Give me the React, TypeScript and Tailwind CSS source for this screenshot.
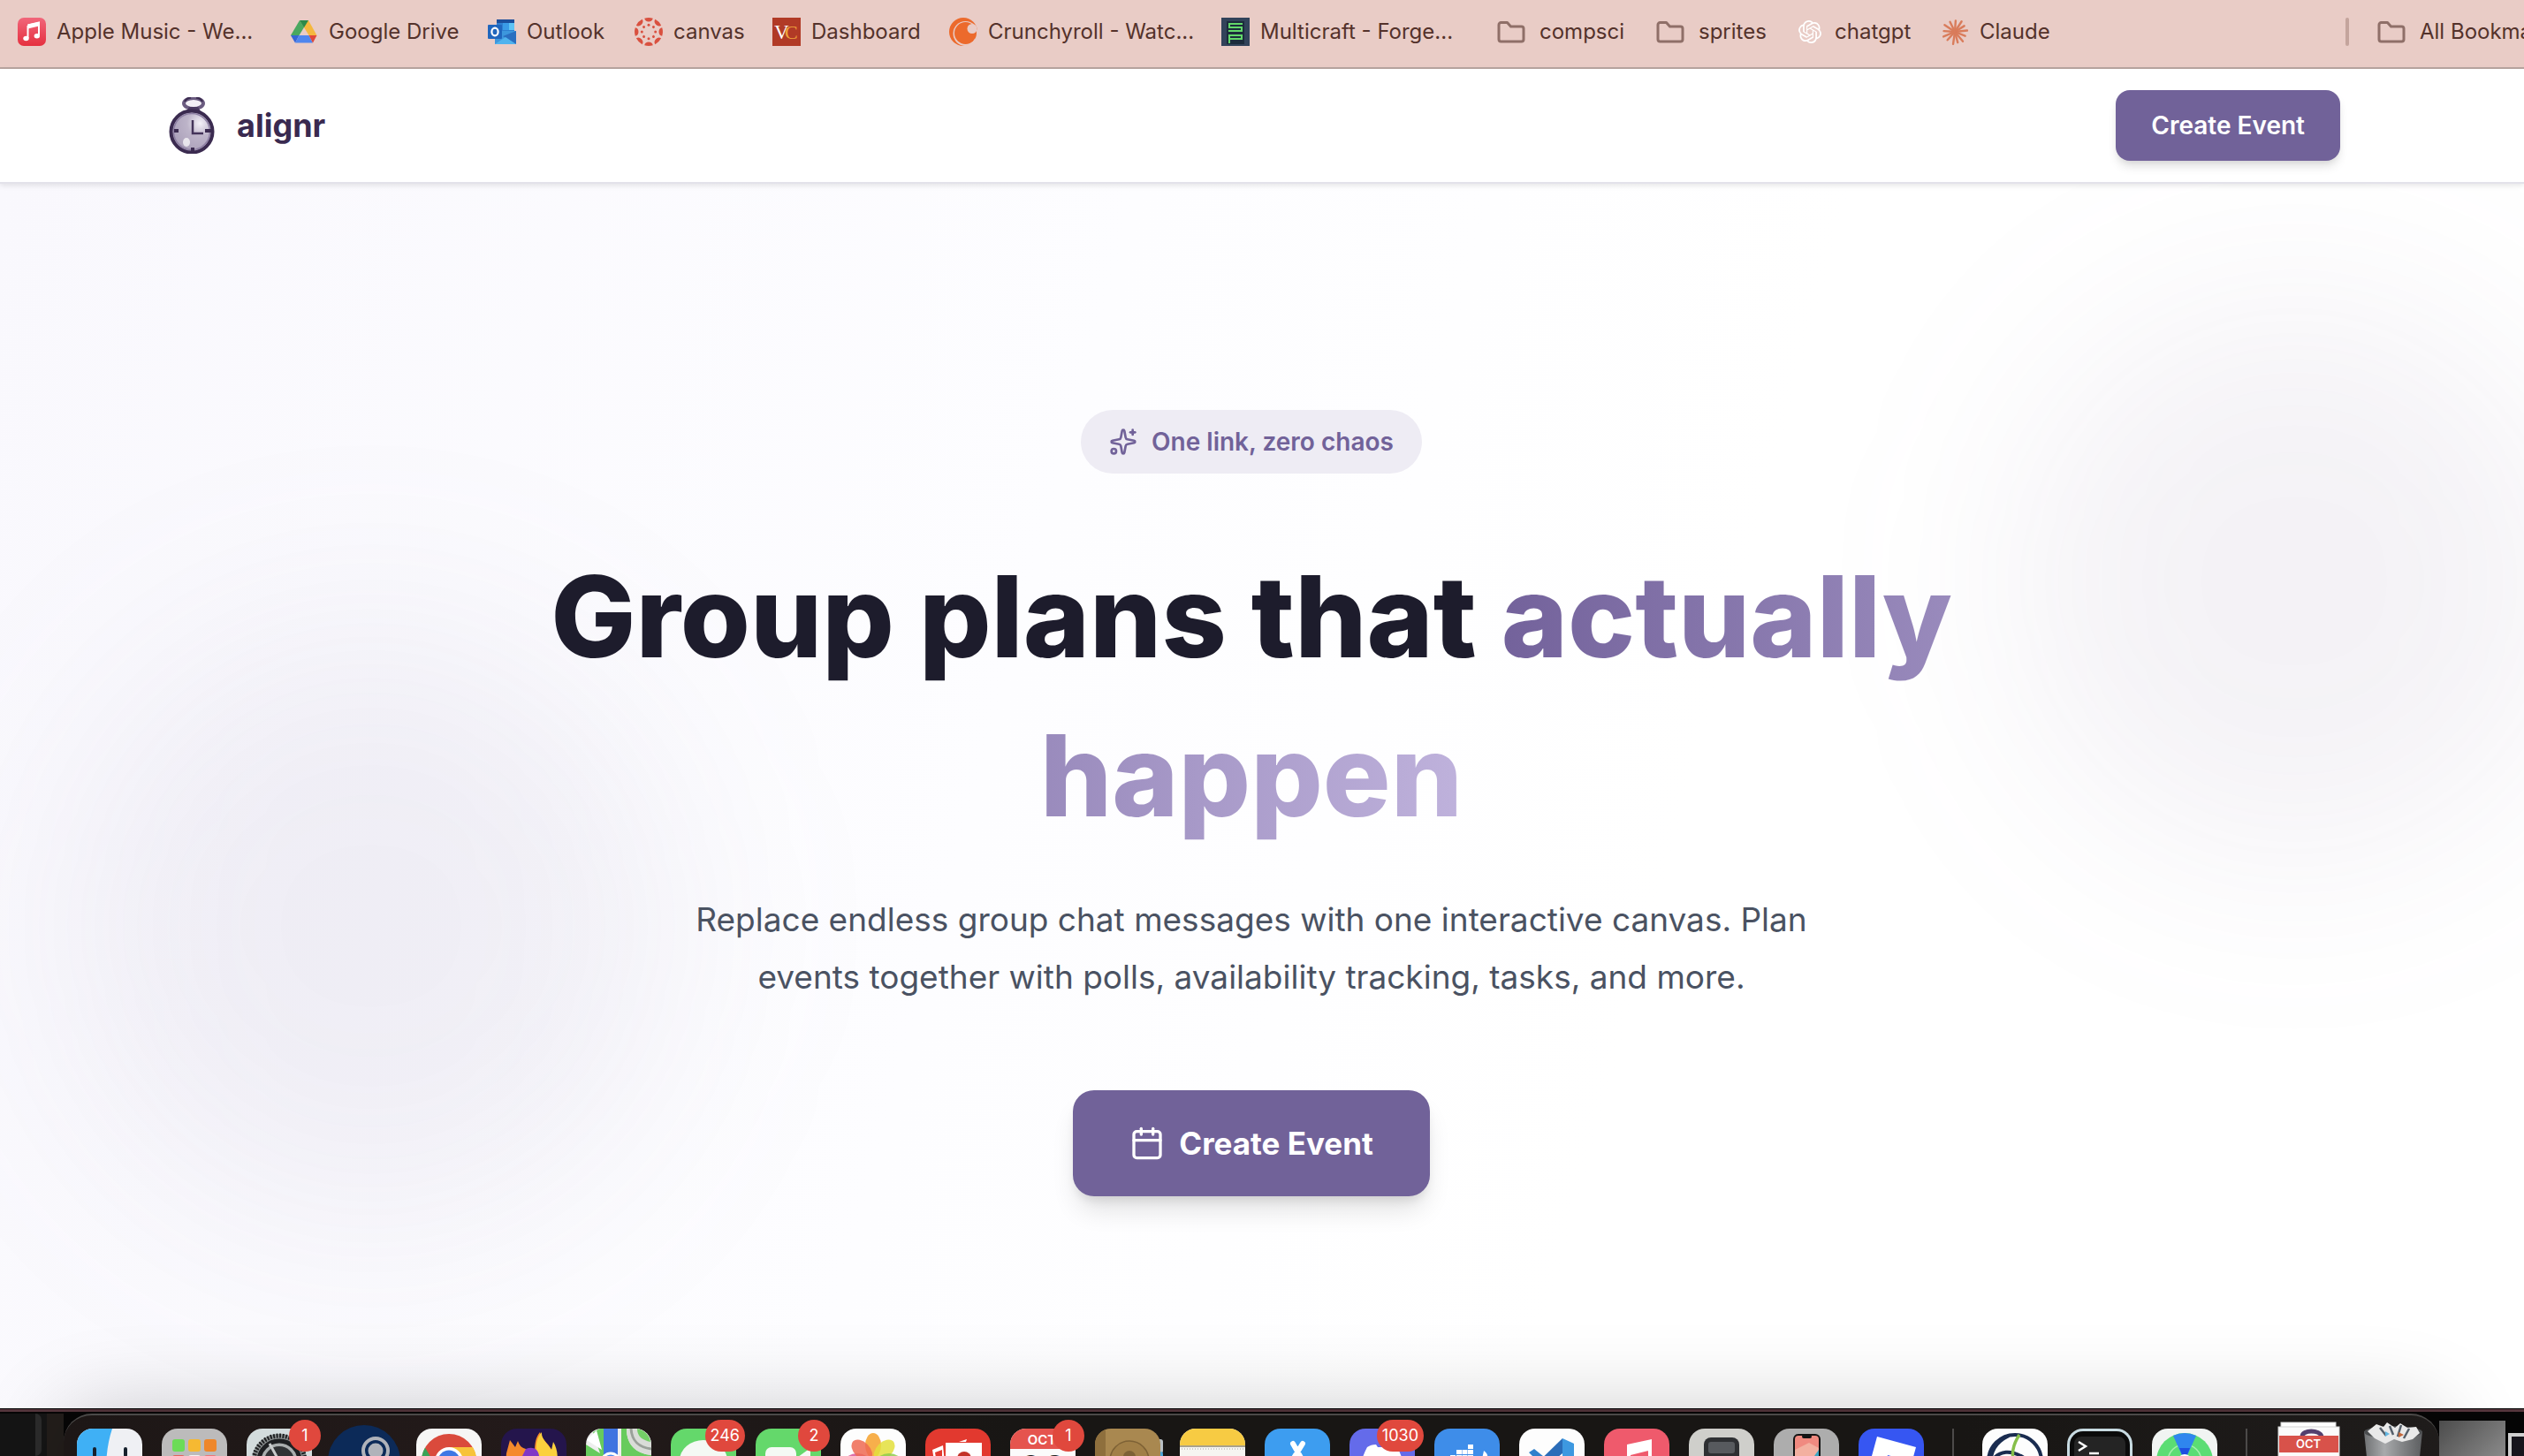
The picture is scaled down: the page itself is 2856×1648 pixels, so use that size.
import type { ReactNode } from 'react';
import { Calendar, Sparkles } from 'lucide-react';
import { SiOpenai } from 'react-icons/si';

/* ---------- Bookmark bar ---------- */

function FolderIcon() {
  return (
    <svg viewBox="0 0 32 32" className="size-8 shrink-0" fill="none" stroke="#8f6f68" strokeWidth="3" strokeLinejoin="round">
      <path d="M2 8a2.500 2.500 0 0 1 2.500-2.500h7l4 4.500h12a2.500 2.500 0 0 1 2.500 2.500v12a2.500 2.500 0 0 1-2.500 2.500h-23A2.500 2.500 0 0 1 2 24.500z" />
    </svg>
  );
}

function AppleMusicIcon() {
  return (
    <svg viewBox="0 0 32 32" className="size-8 shrink-0">
      <defs>
        <linearGradient id="am" x1="0" y1="0" x2="0" y2="1">
          <stop offset="0" stopColor="#f1667a" />
          <stop offset="1" stopColor="#e5303f" />
        </linearGradient>
      </defs>
      <rect width="32" height="32" rx="7" fill="url(#am)" />
      <path d="M11.500 8.500 24 5.500v14.500" fill="none" stroke="#fff" strokeWidth="2" />
      <path d="M11.500 7.500 24 5v4.500l-12.500 3z" fill="#fff" />
      <path d="M11.500 9v14" stroke="#fff" strokeWidth="2" />
      <ellipse cx="9.500" cy="23.500" rx="3.200" ry="2.700" fill="#fff" />
      <ellipse cx="21.800" cy="20.800" rx="3.200" ry="2.700" fill="#fff" />
    </svg>
  );
}

function DriveIcon() {
  return (
    <svg viewBox="0 0 32 32" className="size-8 shrink-0">
      <path d="M21 3l9.500 17h-9L11.200 3z" fill="#f5b83d" />
      <path d="M11 3l5 8 -5.500 9H1z" fill="#4aa860" />
      <path d="M11 3h10l-5 8.200z" fill="#2c8a4a" />
      <path d="M1 20h9.500L6 28.500z" fill="#3566d6" />
      <path d="M6 28.500 10.500 20h11l4.500 8.500z" fill="#4f86ee" />
      <path d="M21.500 20h9L26 28.500z" fill="#e0473a" />
    </svg>
  );
}

function OutlookIcon() {
  return (
    <svg viewBox="0 0 32 32" className="size-8 shrink-0">
      <rect x="10" y="2" width="20" height="20" fill="#2f7fd0" />
      <rect x="10" y="2" width="20" height="4" fill="#1b4f9c" />
      <rect x="17" y="6" width="7" height="8" fill="#3a9be6" />
      <rect x="24" y="6" width="6" height="8" fill="#5ec4f5" />
      <path d="M8 15h24v15H8z" fill="#3c97dd" />
      <path d="M32 15v15L17 21z" fill="#2a6fc0" />
      <path d="M8 30l12-8 12 8z" fill="#4fb3ee" />
      <rect x="0" y="8" width="16" height="16" rx="1" fill="#2066bd" />
      <ellipse cx="8" cy="16" rx="3.600" ry="4.400" fill="none" stroke="#fff" strokeWidth="2.200" />
    </svg>
  );
}

function CanvasIcon() {
  const spokes = [0, 45, 90, 135, 180, 225, 270, 315];
  return (
    <svg viewBox="0 0 32 32" className="size-8 shrink-0" fill="#d9503f">
      {spokes.map((a) => (
        <g key={a} transform={`rotate(${a} 16 16)`}>
          <path d="M11.200.800a16 16 0 0 1 9.600 0 4.900 4.600 0 0 1-9.600 0z" />
          <circle cx="16" cy="8.300" r="1.500" />
        </g>
      ))}
    </svg>
  );
}

function DashboardIcon() {
  return (
    <svg viewBox="0 0 32 32" className="size-8 shrink-0">
      <rect width="32" height="32" fill="#b13a26" />
      <text x="2" y="24" fontSize="23" fontFamily="Liberation Serif, serif" fill="#fff">V</text>
      <text x="14" y="24" fontSize="22" fontFamily="Liberation Serif, serif" fill="#f0a63c">C</text>
    </svg>
  );
}

function CrunchyrollIcon() {
  return (
    <svg viewBox="0 0 32 32" className="size-8 shrink-0">
      <circle cx="16" cy="16" r="16" fill="#ec6a2c" />
      <circle cx="18.500" cy="18" r="14" fill="#e9ccc6" />
      <circle cx="18.500" cy="17.500" r="12.500" fill="#ec6a2c" />
      <circle cx="26" cy="12.500" r="5.500" fill="#e9ccc6" />
      <path d="M29 24a15 15 0 0 1-14 8l14-3z" fill="#e9ccc6" />
    </svg>
  );
}

function MulticraftIcon() {
  return (
    <svg viewBox="0 0 32 32" className="size-8 shrink-0">
      <rect width="32" height="32" fill="#32435a" />
      <rect x="6" y="4" width="20" height="26" fill="#1c2c3c" />
      <path d="M24 7H9v4h14v4H8M9 29v-9h14v4H9" fill="none" stroke="#62d86a" strokeWidth="2" />
    </svg>
  );
}

function ChatGptIcon() {
  return <SiOpenai className="mx-[3px] size-[26px] shrink-0 text-white" />;
}

function ClaudeIcon() {
  const rays = [4, 33, 58, 84, 112, 140, 165, 188, 222, 247, 274, 304, 334];
  return (
    <svg viewBox="0 0 32 32" className="size-8 shrink-0" stroke="#d97c5b" strokeWidth="2.400" strokeLinecap="round">
      {rays.map((a, i) => (
        <path key={a} d={i % 2 ? 'M16 16V2' : 'M16 16V3.500'} transform={`rotate(${a} 16 16)`} />
      ))}
    </svg>
  );
}

const bookmarks: { label: string; icon: ReactNode; box: string }[] = [
  { label: 'Apple Music - We...', icon: <AppleMusicIcon />, box: 'w-[308px] gap-3' },
  { label: 'Google Drive', icon: <DriveIcon />, box: 'w-[224px] gap-3' },
  { label: 'Outlook', icon: <OutlookIcon />, box: 'w-[166px] gap-3' },
  { label: 'canvas', icon: <CanvasIcon />, box: 'w-[156px] gap-3' },
  { label: 'Dashboard', icon: <DashboardIcon />, box: 'w-[200px] gap-3' },
  { label: 'Crunchyroll - Watc...', icon: <CrunchyrollIcon />, box: 'w-[308px] gap-3' },
  { label: 'Multicraft - Forge...', icon: <MulticraftIcon />, box: 'w-[312px] gap-3' },
  { label: 'compsci', icon: <FolderIcon />, box: 'w-[180px] gap-4' },
  { label: 'sprites', icon: <FolderIcon />, box: 'w-[158px] gap-4' },
  { label: 'chatgpt', icon: <ChatGptIcon />, box: 'w-[164px] gap-3' },
  { label: 'Claude', icon: <ClaudeIcon />, box: 'w-[164px] gap-3' },
];

function BookmarkBar() {
  return (
    <nav aria-label="Bookmarks" className="flex h-[78px] shrink-0 items-center overflow-hidden border-b-2 border-[#b9a5a0] bg-[#e9ccc6] pb-1 pl-5 text-2xl text-[#54322b]">
      {bookmarks.map((b) => (
        <a key={b.label} href="#" className={`flex shrink-0 items-center whitespace-nowrap ${b.box}`}>
          {b.icon}
          {b.label}
        </a>
      ))}
      <div className="ml-auto flex w-[202px] shrink-0 items-center">
        <span className="mr-8 h-8 w-1 shrink-0 rounded-full bg-[#c4a49c]" />
        <button type="button" className="flex items-center gap-4 whitespace-nowrap">
          <FolderIcon />
          All Bookmarks
        </button>
      </div>
    </nav>
  );
}

/* ---------- Site ---------- */

function StopwatchLogo() {
  return (
    <svg viewBox="0 0 64 64" className="size-16">
      <defs>
        <radialGradient id="face" cx="0.7" cy="0.3" r="0.9">
          <stop offset="0" stopColor="#f4f1f8" />
          <stop offset="0.35" stopColor="#bdb4c9" />
          <stop offset="1" stopColor="#a398b3" />
        </radialGradient>
      </defs>
      <ellipse cx="35" cy="7" rx="11" ry="6" fill="#f3f0f6" stroke="#6b5c80" strokeWidth="4" />
      <path d="M25 5c1-3 4-4 7-4.500M45 5c-1-3-4-4-7-4.500" fill="none" stroke="#3b2b50" strokeWidth="2" />
      <path d="M30 11h10l3 5H27z" fill="#4a3a60" />
      <ellipse cx="33" cy="39" rx="23.500" ry="23.500" fill="url(#face)" stroke="#3b2b50" strokeWidth="4" />
      <ellipse cx="33" cy="39" rx="20.500" ry="20.500" fill="none" stroke="#8d7fa3" strokeWidth="1.500" />
      <ellipse cx="27" cy="51" rx="4" ry="5" fill="#fff" opacity="0.7" />
      <path d="M34 26v15h12" fill="none" stroke="#44345a" strokeWidth="2.500" />
      <path d="M13 38h5M48 38h7M34 57v6" stroke="#3b2b50" strokeWidth="4" />
    </svg>
  );
}

function SiteHeader() {
  return (
    <header className="relative z-10 shrink-0 border-b-2 border-[#e3e2ea] bg-white pr-6 shadow-[0_2px_6px_rgba(0,0,0,0.1)]">
      <div className="mx-auto flex h-32 max-w-[2560px] items-center justify-between px-12">
        <a href="#" className="flex items-center gap-5 text-4xl font-bold text-[#3a2a50]">
          <StopwatchLogo />
          alignr
        </a>
        <button type="button" className="h-20 rounded-2xl bg-[#716299] px-10 text-[28px] font-semibold text-white shadow-[0_8px_12px_-2px_rgba(0,0,0,0.12),0_4px_8px_-4px_rgba(0,0,0,0.1)]">
          Create Event
        </button>
      </div>
    </header>
  );
}

function Hero() {
  return (
    <main className="relative flex-1 overflow-hidden bg-[linear-gradient(105deg,#f9f8fd_0%,#fdfdff_40%,#ffffff_65%)] pt-64 pr-6">
      <div className="absolute -right-[60px] top-[130px] size-[640px] rounded-full bg-[#6f5a86]/8 blur-[110px]" />
      <div className="absolute left-[80px] top-[500px] size-[680px] rounded-full bg-[#66558a]/8 blur-[120px]" />
      <div className="relative flex flex-col items-center text-center">
        <div className="flex h-[72px] items-center gap-4 rounded-full bg-[#eeecf4] px-8 text-[28px] font-semibold text-[#716299]">
          <Sparkles className="size-8" strokeWidth={2} />
          One link, zero chaos
        </div>
        <h1 className="mt-[72px] max-w-[1792px] text-[128px] leading-[180px] font-extrabold text-[#1d1c2c]">
          Group plans that{' '}
          <span className="bg-gradient-to-r from-[#73629b] to-[#bfb2dc] bg-clip-text text-transparent">actually happen</span>
        </h1>
        <p className="mt-10 max-w-[1344px] text-[37px] leading-[65px] text-[#4a5262]">
          Replace endless group chat messages with one interactive canvas. Plan events together with polls, availability tracking, tasks, and more.
        </p>
        <button type="button" className="mt-24 flex h-[120px] items-center gap-4 rounded-3xl bg-[#716299] px-16 text-[35px] font-bold text-white shadow-[0_20px_30px_-6px_rgba(0,0,0,0.12),0_8px_12px_-4px_rgba(0,0,0,0.1)]">
          <Calendar className="size-10" strokeWidth={2} />
          Create Event
        </button>
      </div>
    </main>
  );
}

/* ---------- Dock ---------- */

function Tile({ fill, children }: { fill: string; children?: ReactNode }) {
  return (
    <>
      <rect width="74" height="74" rx="18" fill={fill} />
      {children}
    </>
  );
}

const petals = ['#f6a12c', '#e3df3c', '#8fcb4e', '#57b7a6', '#5a8fd8', '#a56bc6', '#d9569a', '#ee6a52'];

type DockApp = { name: string; badge?: string; art: ReactNode };

const apps: DockApp[] = [
  {
    name: 'Finder',
    art: (
      <Tile fill="#eff0f4">
        <path d="M18 0h22c-4 12-6 24-7 40v34H18A18 18 0 0 1 0 56V18A18 18 0 0 1 18 0z" fill="#3fb0f5" />
        <rect x="18" y="21" width="4" height="11" rx="2" fill="#16202c" />
        <rect x="53" y="21" width="4" height="11" rx="2" fill="#16202c" />
      </Tile>
    ),
  },
  {
    name: 'Launchpad',
    art: (
      <Tile fill="#bcbbbb">
        <rect x="12" y="12" width="14" height="14" rx="3" fill="#6cdc57" />
        <rect x="30" y="12" width="14" height="14" rx="3" fill="#f6b932" />
        <rect x="48" y="12" width="14" height="14" rx="3" fill="#ee872b" />
        <rect x="12" y="30" width="14" height="14" rx="3" fill="#e6615a" />
        <rect x="30" y="30" width="14" height="14" rx="3" fill="#f4f4f4" />
        <rect x="48" y="30" width="14" height="14" rx="3" fill="#ef7478" />
      </Tile>
    ),
  },
  {
    name: 'System Settings',
    badge: '1',
    art: (
      <Tile fill="#d3dcdd">
        <circle cx="37" cy="37" r="31" fill="#8f9494" />
        <circle cx="37" cy="37" r="29" fill="none" stroke="#1e2022" strokeWidth="5" strokeDasharray="2 1.500" />
        <circle cx="37" cy="37" r="23" fill="#a9aeae" stroke="#1e2022" strokeWidth="5" />
        <circle cx="37" cy="37" r="17" fill="#303335" />
        <path d="M37 37 26 17M37 37h24M37 37 26 57" stroke="#c8cccc" strokeWidth="3" />
      </Tile>
    ),
  },
  {
    name: 'Steam',
    art: (
      <>
        <circle cx="37" cy="37" r="41" fill="#0c2a58" />
        <circle cx="50" cy="25" r="14" fill="#0c2a58" stroke="#b0b3ba" strokeWidth="4" />
        <circle cx="50" cy="25" r="8.500" fill="#b0b3ba" />
        <path d="M38 32 28 46l10 6 14-12z" fill="#b0b3ba" />
      </>
    ),
  },
  {
    name: 'Chrome',
    art: (
      <Tile fill="#f6f6f5">
        <circle cx="37" cy="37" r="31" fill="#da4a3c" />
        <path d="M37 21h27A31 31 0 0 1 37 68l14-23z" fill="#f7c33b" />
        <path d="M10 21.500 24 45l13 23A31 31 0 0 1 10 21.500z" fill="#39a357" />
        <circle cx="37" cy="37" r="16" fill="#fff" />
        <circle cx="37" cy="37" r="12.500" fill="#3f78e4" />
      </Tile>
    ),
  },
  {
    name: 'Firefox',
    art: (
      <Tile fill="#24154c">
        <path d="M44 4c2 9 12 14 16 26 2 8 1 20-8 28H22C8 50 5 38 6 28l4-15 6 8 3-7c2 6 5 8 9 9l10 4c0-10 1-17 6-23z" fill="#f58a2b" />
        <path d="M46 4c-1 8 8 14 11 20l2-9c8 12 6 34-6 44H34c10-10 12-20 6-30-1-10 0-18 6-25z" fill="#fbd13d" />
        <path d="M28 23c7-3 14-1 15 8H24z" fill="#8138c6" />
      </Tile>
    ),
  },
  {
    name: 'Maps',
    art: (
      <>
        <rect width="74" height="74" rx="18" fill="#eeeeee" />
        <path d="M18 0h-2L8 4 16 28 0 18v38a18 18 0 0 0 18 18h2V0z" fill="#67cb5d" />
        <path d="M1 13 12 2l6 22z" fill="#fff" />
        <path d="M40 0h6c0 18 10 28 28 30v26a18 18 0 0 1-18 18H40z" fill="#67cb5d" />
        <path d="M46 0h10a18 18 0 0 1 18 18v12C56 28 46 18 46 0z" fill="#d9dcd8" />
        <path d="M51 0c1 14 8 21 23 23" fill="none" stroke="#9aa09a" strokeWidth="3" />
        <path d="M58 0a18 18 0 0 1 15 15C64 13 58 9 58 0z" fill="#74cf67" />
        <rect x="20" width="16" height="74" fill="#3f74e0" />
        <circle cx="28" cy="38" r="10" fill="#4a8cf0" stroke="#fff" strokeWidth="3" />
      </>
    ),
  },
  {
    name: 'Messages',
    badge: '246',
    art: (
      <Tile fill="#64d86b">
        <ellipse cx="37" cy="36" rx="27" ry="23" fill="#f4f9f4" />
      </Tile>
    ),
  },
  {
    name: 'FaceTime',
    badge: '2',
    art: (
      <Tile fill="#64d86b">
        <rect x="11" y="21" width="35" height="32" rx="7" fill="#f4f9f4" />
        <path d="M48 32 62 22v30L48 42z" fill="#f4f9f4" />
      </Tile>
    ),
  },
  {
    name: 'Photos',
    art: (
      <Tile fill="#fdfdfd">
        {petals.map((c, i) => (
          <ellipse key={c} cx="37" cy="19" rx="9" ry="14" fill={c} opacity="0.85" transform={`rotate(${i * 45} 37 37)`} />
        ))}
      </Tile>
    ),
  },
  {
    name: 'Photo Booth',
    art: (
      <Tile fill="#e2392f">
        <path d="M8 24 20 19l3 30-10 6z" fill="#fff" />
        <path d="M11 27l8-3v20h-5z" fill="#e2392f" />
        <path d="M38 15l9-3-1 3z" fill="#fff" />
        <rect x="23" y="16" width="41" height="46" fill="#fff" />
        <circle cx="44" cy="34" r="8" fill="#c33227" />
      </Tile>
    ),
  },
  {
    name: 'Calendar',
    badge: '1',
    art: (
      <>
        <rect width="74" height="74" rx="18" fill="#fbfbfb" />
        <path d="M18 0h38a18 18 0 0 1 18 18v5H0v-5A18 18 0 0 1 18 0z" fill="#e5544e" />
        <text x="36" y="18" textAnchor="middle" fontSize="15" fontWeight="600" fill="#fff">OCT</text>
        <text x="37" y="62" textAnchor="middle" fontSize="44" fill="#222">23</text>
      </>
    ),
  },
  {
    name: 'Contacts',
    art: (
      <>
        <rect x="60" y="12" width="17" height="16" rx="3" fill="#b9c0c4" />
        <rect x="60" y="26" width="17" height="16" rx="3" fill="#4aa5d8" />
        <Tile fill="#a98850">
          <path d="M12 1v72A18 18 0 0 1 0 56V18A18 18 0 0 1 12 1z" fill="#8e6f3d" />
          <circle cx="39" cy="36" r="22" fill="#a17f47" stroke="#7d6135" strokeWidth="1.500" />
          <circle cx="39" cy="32" r="7" fill="#7d6135" />
        </Tile>
      </>
    ),
  },
  {
    name: 'Notes',
    art: (
      <>
        <rect width="74" height="74" rx="18" fill="#f6f5f1" />
        <path d="M18 0h38a18 18 0 0 1 18 18v1H0v-1A18 18 0 0 1 18 0z" fill="#f7cb43" />
        <path d="M0 20h74" stroke="#a9a28c" strokeWidth="2" />
        <path d="M2 23h70" stroke="#a6a49d" strokeWidth="1" strokeDasharray="1 2" />
      </>
    ),
  },
  {
    name: 'App Store',
    art: (
      <Tile fill="#3d9df0">
        <path d="M32 17 52 52M43 17 20 54M14 44h26M46 44h14" stroke="#fff" strokeWidth="6" strokeLinecap="round" />
      </Tile>
    ),
  },
  {
    name: 'Discord',
    badge: '1030',
    art: (
      <Tile fill="#646bea">
        <path d="M20 21c3-2 6-3 10-3l2 3h10l2-3c4 0 7 1 10 3 5 9 8 19 7 29-4 3-8 5-12 6H25c-4-1-8-3-12-6-1-10 2-20 7-29z" fill="#fff" />
      </Tile>
    ),
  },
  {
    name: 'Docker',
    art: (
      <Tile fill="#3e8de9">
        <g fill="#fff">
          <rect x="38" y="18" width="6" height="5" />
          <rect x="25" y="24" width="6" height="5" />
          <rect x="31.500" y="24" width="6" height="5" />
          <rect x="38" y="24" width="6" height="5" />
          <rect x="18" y="30" width="6" height="5" />
          <rect x="25" y="30" width="6" height="5" />
          <rect x="31.500" y="30" width="6" height="5" />
          <rect x="38" y="30" width="6" height="5" />
          <path d="M56 25c4 3 5 6 4 9l6 1c-3 5-8 5-10 5-6 14-16 18-28 17-10-1-15-9-15-20h38c3-1 4-7 5-12z" />
        </g>
      </Tile>
    ),
  },
  {
    name: 'Visual Studio Code',
    art: (
      <Tile fill="#fdfdfd">
        <path d="M49 11 62 17v42l-13 6z" fill="#3d98e0" />
        <path d="M49 11v17L18 54l-7-6z" fill="#2a6cb8" />
        <path d="M11 27l6-4 32 26v16z" fill="#2f80cc" />
      </Tile>
    ),
  },
  {
    name: 'Music',
    art: (
      <Tile fill="#ef5a6c">
        <path d="M26 18 54 12v12l-24 6v22h-4zM50 24h4v22h-4z" fill="#fff" />
        <ellipse cx="23" cy="52" rx="8" ry="6" fill="#fff" />
        <ellipse cx="47" cy="46" rx="8" ry="6" fill="#fff" />
      </Tile>
    ),
  },
  {
    name: 'Device Utility',
    art: (
      <Tile fill="#cfcfcb">
        <rect x="17" y="10" width="40" height="56" rx="8" fill="#2e3033" />
        <rect x="22" y="15" width="30" height="13" rx="3" fill="#575a5e" />
      </Tile>
    ),
  },
  {
    name: 'iPhone Mirroring',
    art: (
      <Tile fill="#adadad">
        <rect x="22" y="6" width="31" height="64" rx="6" fill="#141414" />
        <rect x="24" y="8" width="27" height="60" rx="4" fill="#f08a80" />
        <path d="M24 24 40 16l11 6v10L34 40H24z" fill="#f3b0a0" />
        <path d="M51 24v18H38z" fill="#3fa7c4" />
        <rect x="32" y="7" width="11" height="4" rx="2" fill="#141414" />
      </Tile>
    ),
  },
  {
    name: 'Roblox',
    art: (
      <Tile fill="#3656f2">
        <path d="M21 9 65 21 53 65 9 53z" fill="#fff" />
        <path d="M33 30l11 3-3 11-11-3z" fill="#3656f2" />
      </Tile>
    ),
  },
];

const utilities: DockApp[] = [
  {
    name: 'Network Monitor',
    art: (
      <Tile fill="#fdfdfd">
        <circle cx="37" cy="37" r="30" fill="none" stroke="#1a2c50" strokeWidth="4" />
        <path d="M8 42c8-18 26-22 48-2M30 8C14 16 10 26 9 40" fill="none" stroke="#1a2c50" strokeWidth="4" />
        <path d="M42 7c-8 12-9 22-6 34" fill="none" stroke="#86bf4a" strokeWidth="3.500" />
      </Tile>
    ),
  },
  {
    name: 'Terminal',
    art: (
      <>
        <rect width="74" height="74" rx="18" fill="#c8dbe2" />
        <rect x="3" y="3" width="68" height="68" rx="15" fill="#0b0b0b" />
        <rect x="8" y="9" width="58" height="56" rx="8" fill="#242424" />
        <path d="M13 15l8 5-8 5M25 28h11" fill="none" stroke="#fff" strokeWidth="2.500" />
      </>
    ),
  },
  {
    name: 'Find My',
    art: (
      <Tile fill="#f1f4f2">
        <circle cx="37" cy="37" r="32" fill="#5bdd74" />
        <circle cx="37" cy="37" r="19" fill="none" stroke="#a5f0ae" strokeWidth="1.500" />
        <path d="M37 37 24 8a32 32 0 0 1 26 0z" fill="#2f86ee" />
        <path d="M37 37 31 22h12z" fill="#1d4fe0" />
        <circle cx="37" cy="37" r="8" fill="#fff" />
      </Tile>
    ),
  },
];

const shelf: DockApp[] = [
  {
    name: 'Screenshots',
    art: (
      <>
        <rect x="6" y="-7" width="62" height="40" fill="#fff" stroke="#d3d3d3" />
        <rect x="3" y="-2" width="69" height="74" fill="#fbfbfb" stroke="#d3d3d3" />
        <path d="M30 9c0-8 20-8 22 0" fill="none" stroke="#54406e" strokeWidth="5" />
        <rect x="4" y="8" width="67" height="19" fill="#d8524a" />
        <text x="37" y="22" textAnchor="middle" fontSize="13" fontWeight="600" fill="#fff">OCT</text>
      </>
    ),
  },
  {
    name: 'Trash',
    art: (
      <>
        <defs>
          <linearGradient id="bin" x1="0" x2="1">
            <stop offset="0" stopColor="#6f7173" />
            <stop offset="0.35" stopColor="#a8aaac" />
            <stop offset="0.7" stopColor="#7d7f81" />
            <stop offset="1" stopColor="#5c5e60" />
          </linearGradient>
        </defs>
        <path d="M4 3h66l-7 68H11z" fill="url(#bin)" />
        <ellipse cx="37" cy="4" rx="33" ry="7" fill="#4a4c4e" />
        <path d="M8 3 18-5l8 3 4-5 9 6 6-5 8 5 10-1 4 7-8 7-12 3-9-3-10 5-12-6z" fill="#e9e9e9" />
        <path d="M22-1l7 9M33-3l4 10M46-4l-4 13M55 0l-6 11" stroke="#55606b" strokeWidth="2.500" />
        <path d="M28 3l5 3-5 3z" fill="#62b7e2" />
        <path d="M43 4l6 3-6 3z" fill="#c2673a" />
      </>
    ),
  },
];

function DockIcon({ name, badge, art }: DockApp) {
  return (
    <button type="button" aria-label={name} className="relative size-[74px] shrink-0">
      <svg viewBox="0 0 74 74" className="size-full overflow-visible font-['Inter',sans-serif]">
        {art}
      </svg>
      {badge && (
        <span className="absolute -top-[10px] -right-[10px] flex h-9 min-w-9 items-center justify-center rounded-full bg-[#e0483d] px-[6px] text-lg text-white">
          {badge}
        </span>
      )}
    </button>
  );
}

function DockDivider() {
  return (
    <span className="flex h-[74px] w-[22px] shrink-0 justify-center">
      <span className="w-[2px] bg-[#4c4a49]" />
    </span>
  );
}

function Dock() {
  return (
    <footer className="relative z-10 h-[54px] shrink-0 border-t border-black bg-[#070606]">
      <div className="h-[3px] bg-[#55363d]" />
      <div className="mt-[2px] flex h-12 items-start">
        <div className="flex h-12 min-w-0 flex-1 gap-[6px] bg-[#151515] pl-10">
          <span className="h-full w-2 rounded-r-full bg-[#2c2c2c]" />
          <span className="h-full w-6 bg-[#231e1b]" />
        </div>
        <div className="flex h-[120px] shrink-0 items-start gap-[22px] rounded-t-[32px] border-t-2 border-[#4b4948] bg-[linear-gradient(90deg,#1d1716_0%,#231a1a_20%,#181614_40%,#181614_80%,#1f1c1b_100%)] px-[15px] pt-[15px] shadow-[0_0_100px_rgba(0,0,0,0.22)]">
          {apps.map((a) => (
            <DockIcon key={a.name} {...a} />
          ))}
          <DockDivider />
          {utilities.map((a) => (
            <DockIcon key={a.name} {...a} />
          ))}
          <DockDivider />
          {shelf.map((a) => (
            <DockIcon key={a.name} {...a} />
          ))}
        </div>
        <div className="flex h-12 w-24 shrink-0 items-end gap-[3px] bg-[#050505]">
          <span className="h-10 w-[75px] bg-[linear-gradient(135deg,#4c4c4c,#8a8a8a)]" />
          <span className="h-[26px] flex-1 border-t-4 border-l-4 border-[#cfcfcf] bg-[#17151c]" />
        </div>
      </div>
    </footer>
  );
}

export default function App() {
  return (
    <div className="flex h-screen flex-col overflow-hidden bg-white font-['Inter',sans-serif]">
      <BookmarkBar />
      <SiteHeader />
      <Hero />
      <Dock />
    </div>
  );
}
